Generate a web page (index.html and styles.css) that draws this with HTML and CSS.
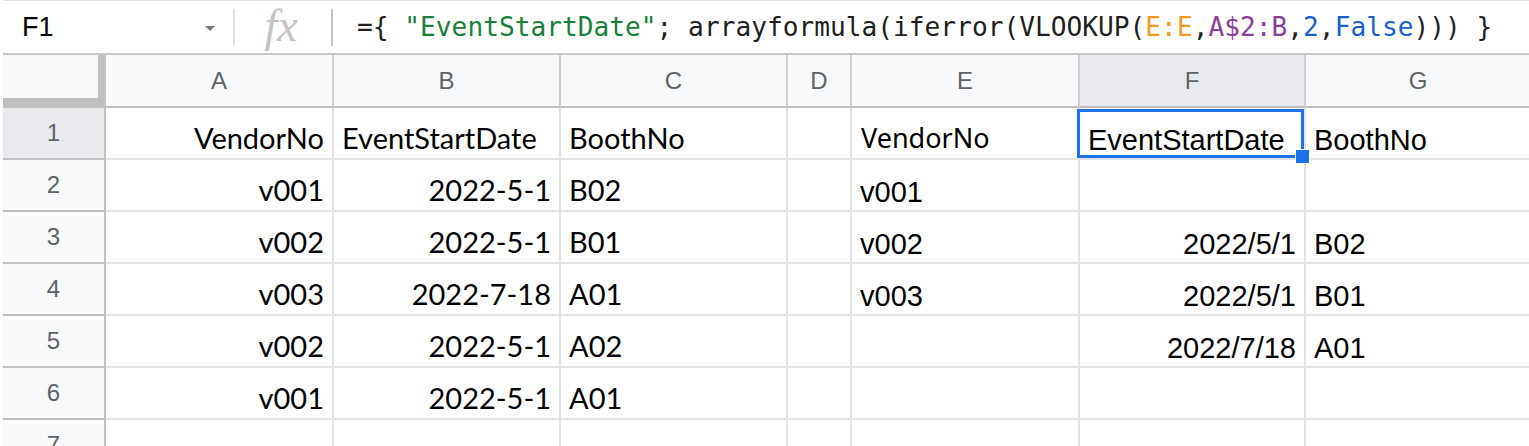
FILE: index.html
```html
<!DOCTYPE html>
<html lang="en">
<head>
    <meta charset="UTF-8">
    <title>Sheet - VLOOKUP</title>
    <link rel="stylesheet" href="styles.css">
</head>
<body>

    <!-- Formula bar -->
    <div class="formula-bar">
        <div class="name-box">
            <span>F1</span>
            <span class="drop-arrow"></span>
        </div>
        <div class="sep light"></div>
        <div class="fx">fx</div>
        <div class="sep"></div>
        <div class="formula">={ <span class="str">"EventStartDate"</span>; arrayformula(iferror(VLOOKUP(<span class="rng1">E:E</span>,<span class="rng2">A$2:B</span>,<span class="nbr">2</span>,<span class="nbr">False</span>))) }</div>
    </div>

    <!-- Grid -->
    <div class="sheet">
        <div class="corner"></div>
        <div class="col-head">A</div>
        <div class="col-head">B</div>
        <div class="col-head">C</div>
        <div class="col-head">D</div>
        <div class="col-head">E</div>
        <div class="col-head active">F</div>
        <div class="col-head">G</div>

        <div class="row-head active">1</div>
        <div class="cell cal right">VendorNo</div>
        <div class="cell cal">EventStartDate</div>
        <div class="cell cal">BoothNo</div>
        <div class="cell"></div>
        <div class="cell noto">VendorNo</div>
        <div class="cell selected">EventStartDate<span class="handle"></span></div>
        <div class="cell">BoothNo</div>

        <div class="row-head">2</div>
        <div class="cell cal right">v001</div>
        <div class="cell cal right">2022-5-1</div>
        <div class="cell cal">B02</div>
        <div class="cell"></div>
        <div class="cell">v001</div>
        <div class="cell"></div>
        <div class="cell"></div>

        <div class="row-head">3</div>
        <div class="cell cal right">v002</div>
        <div class="cell cal right">2022-5-1</div>
        <div class="cell cal">B01</div>
        <div class="cell"></div>
        <div class="cell">v002</div>
        <div class="cell right">2022/5/1</div>
        <div class="cell">B02</div>

        <div class="row-head">4</div>
        <div class="cell cal right">v003</div>
        <div class="cell cal right">2022-7-18</div>
        <div class="cell cal">A01</div>
        <div class="cell"></div>
        <div class="cell">v003</div>
        <div class="cell right">2022/5/1</div>
        <div class="cell">B01</div>

        <div class="row-head">5</div>
        <div class="cell cal right">v002</div>
        <div class="cell cal right">2022-5-1</div>
        <div class="cell cal">A02</div>
        <div class="cell"></div>
        <div class="cell"></div>
        <div class="cell right">2022/7/18</div>
        <div class="cell">A01</div>

        <div class="row-head">6</div>
        <div class="cell cal right">v001</div>
        <div class="cell cal right">2022-5-1</div>
        <div class="cell cal">A01</div>
        <div class="cell"></div>
        <div class="cell"></div>
        <div class="cell"></div>
        <div class="cell"></div>

        <div class="row-head">7</div>
        <div class="cell"></div>
        <div class="cell"></div>
        <div class="cell"></div>
        <div class="cell"></div>
        <div class="cell"></div>
        <div class="cell"></div>
        <div class="cell"></div>
    </div>

</body>
</html>
```

FILE: styles.css
```css
* {
    margin: 0;
    padding: 0;
    box-sizing: border-box;
}

body {
    font-family: 'Liberation Sans', Arial, sans-serif;
    background-color: #fff;
    color: #000;
    overflow: hidden;
}

/* formula bar */
.formula-bar {
    display: flex;
    align-items: center;
    height: 55px;
    border-top: 1px solid #e3e3e3;
    border-bottom: 2px solid #c7c7c7;
    margin-left: 3px;
}

.name-box {
    width: 230px;
    display: flex;
    align-items: center;
    justify-content: space-between;
    padding: 0 18px 0 19px;
    font-size: 27px;
}

.drop-arrow {
    width: 0;
    height: 0;
    border-left: 5px solid transparent;
    border-right: 5px solid transparent;
    border-top: 5px solid #777;
    margin-top: 3px;
}

.sep {
    width: 2px;
    height: 37px;
    background-color: #c4c4c4;
}

.sep.light {
    background-color: #e2e2e2;
}

.fx {
    width: 96px;
    height: 52px;
    display: flex;
    align-items: center;
    justify-content: center;
    font-family: 'Liberation Serif', 'Times New Roman', serif;
    font-style: italic;
    font-size: 46px;
    color: #c4c4c4;
    padding: 0 4px 4px 0;
}

.formula {
    padding-left: 24px;
    font-family: 'DejaVu Sans Mono', monospace;
    font-size: 26.2px;
    white-space: nowrap;
    color: #1f1f1f;
}

.str { color: #188038; }
.rng1 { color: #f29a1e; }
.rng2 { color: #8a3e98; }
.nbr { color: #1a5fcc; }

/* sheet grid */
.sheet {
    display: grid;
    grid-template-columns: 103px 228px 227px 227px 64px 228px 226px 226px;
    grid-template-rows: 53px repeat(7, 52px);
    margin-left: 3px;
}

.corner {
    background-color: #f8f9fa;
    border-right: 8px solid #c0c0c0;
    border-bottom: 10px solid #c0c0c0;
}

.col-head {
    display: flex;
    align-items: center;
    justify-content: center;
    background-color: #f8f9fa;
    border-right: 2px solid #cfcfcf;
    border-bottom: 2px solid #c0c0c0;
    color: #5f6368;
    font-size: 24px;
}

.row-head {
    display: flex;
    align-items: center;
    justify-content: center;
    background-color: #f8f9fa;
    border-right: 2px solid #c0c0c0;
    border-bottom: 2px solid #c0c0c0;
    color: #5f6368;
    font-size: 24px;
}

.col-head.active,
.row-head.active {
    background-color: #e8eaed;
}

.cell {
    display: flex;
    align-items: flex-end;
    padding: 0 8px 1px 8px;
    border-right: 2px solid #e2e2e2;
    border-bottom: 2px solid #e2e2e2;
    font-size: 29px;
    white-space: nowrap;
}

.cell.right {
    justify-content: flex-end;
}

.cell.cal {
    font-family: Lato, 'Open Sans', sans-serif;
    padding-bottom: 3px;
}

.cell.noto {
    font-family: 'Noto Sans', 'Open Sans', sans-serif;
    font-size: 27px;
    padding-bottom: 2px;
    padding-left: 9px;
}

.cell.selected {
    position: relative;
}

.cell.selected::after {
    content: "";
    position: absolute;
    left: -3px;
    top: 1px;
    right: 0;
    bottom: 0;
    border: 3px solid #1a73e8;
}

.handle {
    position: absolute;
    right: -6px;
    bottom: -6px;
    width: 15px;
    height: 15px;
    background-color: #1a73e8;
    border: 1px solid #fff;
    z-index: 2;
}
```
